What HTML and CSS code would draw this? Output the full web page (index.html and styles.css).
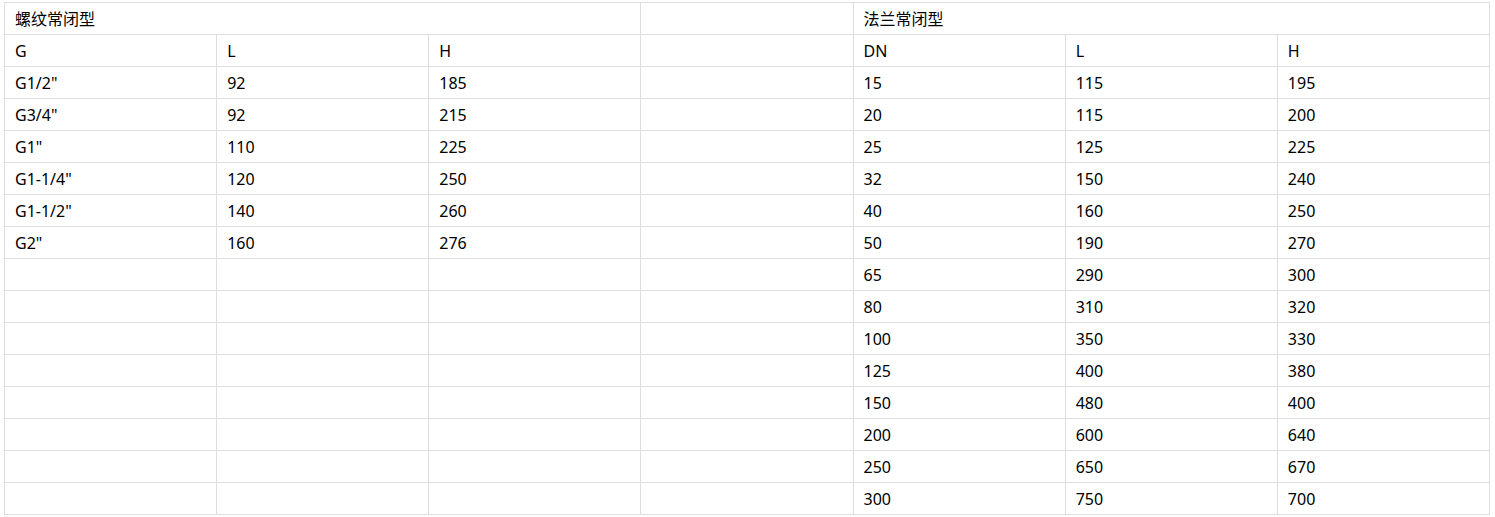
FILE: index.html
```html
<!DOCTYPE html>
<html>
<head>
<meta charset="utf-8">
<link rel="stylesheet" href="styles.css">
</head>
<body>
<table class="spec">
<colgroup>
<col><col><col><col><col><col><col>
</colgroup>
<tbody>
<tr><td colspan="3">螺纹常闭型</td><td></td><td colspan="3">法兰常闭型</td></tr>
<tr><td>G</td><td>L</td><td>H</td><td></td><td>DN</td><td>L</td><td>H</td></tr>
<tr><td>G1/2"</td><td>92</td><td>185</td><td></td><td>15</td><td>115</td><td>195</td></tr>
<tr><td>G3/4"</td><td>92</td><td>215</td><td></td><td>20</td><td>115</td><td>200</td></tr>
<tr><td>G1"</td><td>110</td><td>225</td><td></td><td>25</td><td>125</td><td>225</td></tr>
<tr><td>G1-1/4"</td><td>120</td><td>250</td><td></td><td>32</td><td>150</td><td>240</td></tr>
<tr><td>G1-1/2"</td><td>140</td><td>260</td><td></td><td>40</td><td>160</td><td>250</td></tr>
<tr><td>G2"</td><td>160</td><td>276</td><td></td><td>50</td><td>190</td><td>270</td></tr>
<tr><td></td><td></td><td></td><td></td><td>65</td><td>290</td><td>300</td></tr>
<tr><td></td><td></td><td></td><td></td><td>80</td><td>310</td><td>320</td></tr>
<tr><td></td><td></td><td></td><td></td><td>100</td><td>350</td><td>330</td></tr>
<tr><td></td><td></td><td></td><td></td><td>125</td><td>400</td><td>380</td></tr>
<tr><td></td><td></td><td></td><td></td><td>150</td><td>480</td><td>400</td></tr>
<tr><td></td><td></td><td></td><td></td><td>200</td><td>600</td><td>640</td></tr>
<tr><td></td><td></td><td></td><td></td><td>250</td><td>650</td><td>670</td></tr>
<tr><td></td><td></td><td></td><td></td><td>300</td><td>750</td><td>700</td></tr>
</tbody>
</table>
</body>
</html>
```
FILE: styles.css
```css
html, body {
  margin: 0;
  padding: 0;
  background: #ffffff;
}
body {
  padding: 2px 4px;
  font-family: "Noto Sans", "Noto Sans CJK SC", sans-serif;
  font-size: 16px;
  color: #000000;
}
.spec {
  border-collapse: collapse;
  table-layout: fixed;
  width: 1486px;
}
.spec td {
  border: 1px solid #dddddd;
  height: 32px;
  padding: 0 10px;
  line-height: 22px;
  vertical-align: middle;
  text-align: left;
  white-space: nowrap;
  box-sizing: border-box;
}
```
